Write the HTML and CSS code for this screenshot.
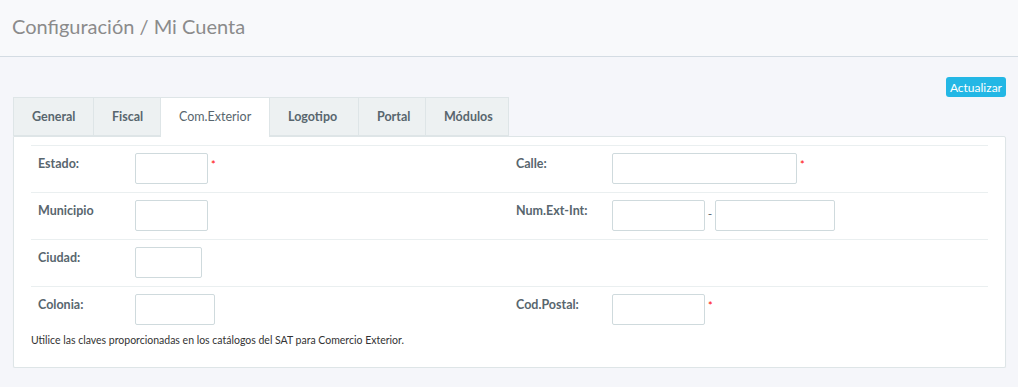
FILE: index.html
```html
<!DOCTYPE html>
<html lang="es">
<head>
    <meta charset="UTF-8">
    <meta name="viewport" content="width=device-width, initial-scale=1.0">
    <title>Configuración / Mi Cuenta</title>
    <link rel="stylesheet" href="styles.css">
</head>
<body>
    <div class="header">
        <h1>Configuración / Mi Cuenta</h1>
    </div>
    <div class="content">
        <div class="actions">
            <button class="btn-info" type="button">Actualizar</button>
        </div>
        <ul class="tabs">
            <li class="tab">General</li>
            <li class="tab">Fiscal</li>
            <li class="tab active">Com.Exterior</li>
            <li class="tab">Logotipo</li>
            <li class="tab">Portal</li>
            <li class="tab">Módulos</li>
        </ul>
        <div class="panel">
            <table class="form-table">
                <tr>
                    <td class="label">Estado:</td>
                    <td class="field"><input class="input w73" type="text"><span class="req">*</span></td>
                    <td class="label">Calle:</td>
                    <td class="field"><input class="input w185" type="text"><span class="req">*</span></td>
                </tr>
                <tr>
                    <td class="label">Municipio</td>
                    <td class="field"><input class="input w73" type="text"></td>
                    <td class="label">Num.Ext-Int:</td>
                    <td class="field"><input class="input w93" type="text"><span class="dash">-</span><input class="input w120" type="text"></td>
                </tr>
                <tr>
                    <td class="label">Ciudad:</td>
                    <td class="field"><input class="input w67" type="text"></td>
                    <td class="label"></td>
                    <td class="field"></td>
                </tr>
                <tr class="last">
                    <td class="label">Colonia:</td>
                    <td class="field"><input class="input w80" type="text"></td>
                    <td class="label">Cod.Postal:</td>
                    <td class="field"><input class="input w93" type="text"><span class="req">*</span></td>
                </tr>
            </table>
            <p class="note">Utilice las claves proporcionadas en los catálogos del SAT para Comercio Exterior.</p>
        </div>
    </div>
</body>
</html>
```

FILE: styles.css
```css
body {
    margin: 0;
    font-family: Lato, "Open Sans", sans-serif;
    background-color: #f5f6fa;
    color: #58666e;
}
.header {
    height: 57px;
    background-color: #f8f9fb;
    border-bottom: 1px solid #d4dce3;
    box-sizing: border-box;
    padding: 14px 12px 0;
}
.header h1 {
    margin: 0;
    font-size: 20px;
    font-weight: 400;
    color: #8b8b8b;
}
.content {
    padding: 20px 12px 0 13px;
}
.actions {
    display: flex;
    justify-content: flex-end;
    height: 20px;
}
.btn-info {
    height: 20px;
    padding: 0 4px;
    border: 0;
    border-radius: 3px;
    background-color: #23b7e5;
    color: #fff;
    font-family: inherit;
    font-size: 12px;
}
.tabs {
    display: flex;
    margin: 0;
    padding: 0;
    list-style: none;
}
.tab {
    height: 39px;
    box-sizing: border-box;
    padding: 0 18px;
    line-height: 38px;
    font-size: 12.5px;
    font-weight: 700;
    color: #58666e;
    background-color: #edf1f2;
    border: 1px solid #dee5e7;
    border-right: 0;
}
.tab:nth-child(1) { width: 80px; }
.tab:nth-child(2) { width: 67px; }
.tab:nth-child(3) { width: 109px; }
.tab:nth-child(4) { width: 89px; }
.tab:nth-child(5) { width: 67px; }
.tab:nth-child(6) { width: 84px; border-right: 1px solid #dee5e7; }
.tab.active {
    background-color: #fff;
    font-weight: 400;
    height: 40px;
    margin-bottom: -1px;
    position: relative;
    border-bottom: 0;
}
.panel {
    background-color: #fff;
    border: 1px solid #dee5e7;
    border-radius: 0 2px 2px 2px;
    box-shadow: 0 1px 1px rgba(0, 0, 0, 0.05);
    padding: 8px 17px 20px;
}
.form-table {
    width: 100%;
    border-collapse: collapse;
    table-layout: fixed;
}
.form-table td {
    border-top: 1px solid #eaeff0;
    padding: 7px 0 8px;
    vertical-align: top;
    font-size: 12.5px;
}
.form-table td.label {
    padding-top: 10px;
    padding-left: 7px;
    font-weight: 700;
}
.form-table td:nth-child(1) { width: 97px; }
.form-table td:nth-child(2) { width: 374px; }
.form-table td:nth-child(3) { width: 96px; }
.input {
    height: 31px;
    box-sizing: border-box;
    border: 1px solid #cfdadd;
    border-radius: 2px;
    padding: 4px 6px;
    font-family: inherit;
    font-size: 13px;
    vertical-align: top;
}
.w67 { width: 67px; }
.w73 { width: 73px; }
.w80 { width: 80px; }
.w93 { width: 93px; }
.w120 { width: 120px; }
.w185 { width: 185px; }
.req {
    display: inline-block;
    margin: 5px 0 0 3px;
    color: #f00;
    font-size: 11px;
}
.dash {
    display: inline-block;
    width: 10px;
    margin-top: 6px;
    text-align: center;
    font-size: 12px;
}
.note {
    margin: 0;
    font-size: 10.5px;
    line-height: 14px;
    color: #333;
}
```
